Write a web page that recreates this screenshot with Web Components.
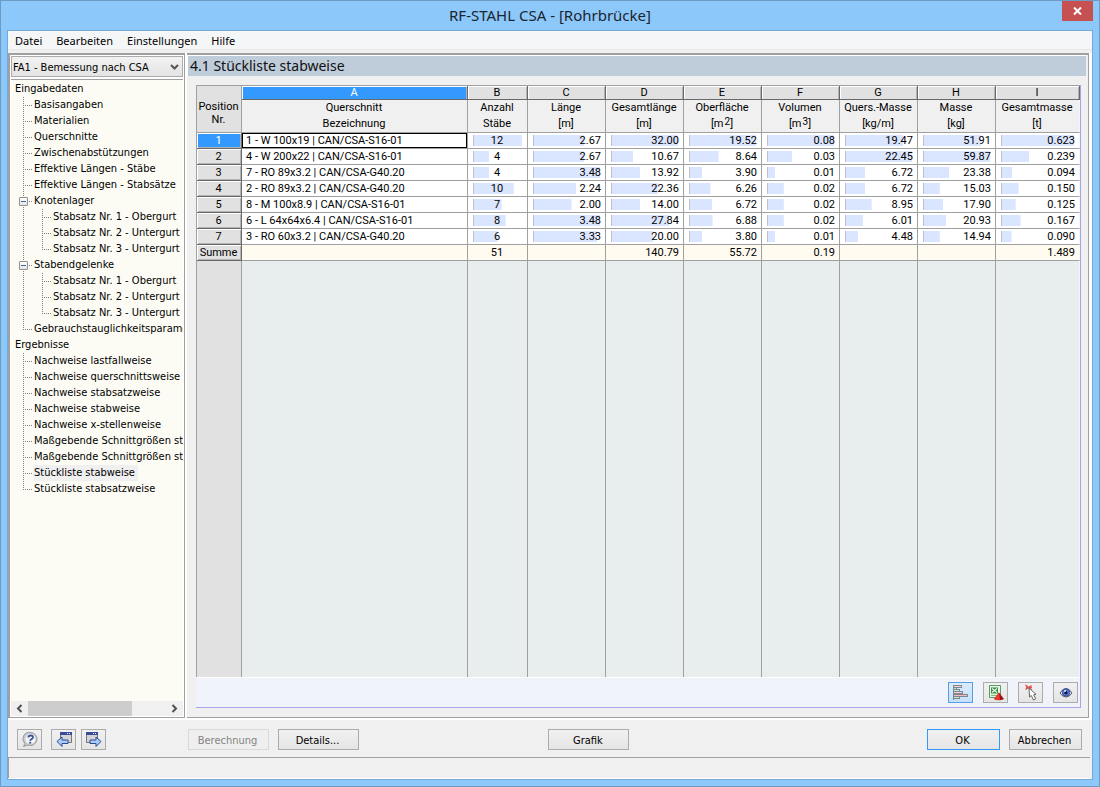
<!DOCTYPE html>
<html lang="de">
<head>
<meta charset="utf-8">
<title>RF-STAHL CSA - [Rohrbrücke]</title>
<style>
  body {
    margin: 0;
    color: #000;
    font: 11px/16px "DejaVu Sans Condensed", "Liberation Sans", sans-serif;
    --line: #a0a0a0;
    --face: #f0f0f0;
    --ui: "Noto Sans", "Open Sans", sans-serif;
    --grid-font: Roboto, "Liberation Sans", sans-serif;
  }
</style>
</head>
<body>
<app-window caption="RF-STAHL CSA - [Rohrbrücke]">
  <menu-bar slot="menu" items="Datei,Bearbeiten,Einstellungen,Hilfe"></menu-bar>

  <side-panel slot="nav" case="FA1 - Bemessung nach CSA">
    <tree-node root label="Eingabedaten">
      <tree-node label="Basisangaben"></tree-node>
      <tree-node label="Materialien"></tree-node>
      <tree-node label="Querschnitte"></tree-node>
      <tree-node label="Zwischenabstützungen"></tree-node>
      <tree-node label="Effektive Längen - Stäbe"></tree-node>
      <tree-node label="Effektive Längen - Stabsätze"></tree-node>
      <tree-node label="Knotenlager" open>
        <tree-node label="Stabsatz Nr. 1 - Obergurt"></tree-node>
        <tree-node label="Stabsatz Nr. 2 - Untergurt"></tree-node>
        <tree-node label="Stabsatz Nr. 3 - Untergurt"></tree-node>
      </tree-node>
      <tree-node label="Stabendgelenke" open>
        <tree-node label="Stabsatz Nr. 1 - Obergurt"></tree-node>
        <tree-node label="Stabsatz Nr. 2 - Untergurt"></tree-node>
        <tree-node label="Stabsatz Nr. 3 - Untergurt"></tree-node>
      </tree-node>
      <tree-node label="Gebrauchstauglichkeitsparameter"></tree-node>
    </tree-node>
    <tree-node root label="Ergebnisse">
      <tree-node label="Nachweise lastfallweise"></tree-node>
      <tree-node label="Nachweise querschnittsweise"></tree-node>
      <tree-node label="Nachweise stabsatzweise"></tree-node>
      <tree-node label="Nachweise stabweise"></tree-node>
      <tree-node label="Nachweise x-stellenweise"></tree-node>
      <tree-node label="Maßgebende Schnittgrößen stabweise"></tree-node>
      <tree-node label="Maßgebende Schnittgrößen stabsatzweise"></tree-node>
      <tree-node label="Stückliste stabweise" selected></tree-node>
      <tree-node label="Stückliste stabsatzweise"></tree-node>
    </tree-node>
  </side-panel>

  <result-panel slot="main" heading="4.1 Stückliste stabweise">
    <parts-table></parts-table>
    <push-button slot="tools" icon active name="Balken anzeigen">
      <svg width="17" height="17" viewBox="0 0 17 17" shape-rendering="crispEdges"><g fill="#fbd3d3" stroke="#7d8794"><path d="M1.500 1.500h8v2h-8zM1.500 7.500h9v2h-9z"/><path d="M1.500 10.500h14v2h-14z" fill="#f7b9bd"/></g><g fill="#c4ecc8" stroke="#7d8794"><path d="M1.500 3.500h3v2h-3zM1.500 5.500h6v2h-6zM1.500 12.500h6v2h-6z"/></g><path d="M1 1v15" stroke="#7d8794"/></svg>
    </push-button>
    <push-button slot="tools" icon name="Excel-Export">
      <svg width="18" height="18" viewBox="0 0 18 18"><path d="M2.500 1.500h11v12h-11z" fill="#e6f3e6" stroke="#5c9c62"/><path d="M4 3.500h7v6H4z" fill="#348a40"/><path d="M5 4.500l5 4M10 4.500l-5 4" stroke="#e8f6e8" stroke-width="1.300"/><path d="M4 11.500h6" stroke="#7bbd7b"/><path d="M12 8.500l5 6.500q-5 2.500-10 0z" fill="#9c1212"/><path d="M12 8.500l1 7.500q-3.500 0-6-1z" fill="#ee3a30"/></svg>
    </push-button>
    <push-button slot="tools" icon name="Auswahl in der Grafik">
      <svg width="18" height="18" viewBox="0 0 18 18"><path d="M3.500 1l6 5M9.500 1.500l-6 4M4 3.500h6" stroke="#dd5555" stroke-width="1.500"/><path d="M7 4l.5 9 1.800-1.500 2.200 4.500 2.200-1.200-2-4 2.300-.5z" fill="#fff" stroke="#666"/></svg>
    </push-button>
    <push-button slot="tools" icon name="Ansichtsmodus">
      <svg width="16" height="14" viewBox="0 0 16 14"><path d="M2 7Q4.500 2.500 8 2.500T14 7Q11.500 11 8 11T2 7z" fill="#e8ecf8" stroke="#555a70"/><circle cx="8" cy="6.500" r="3.700" fill="#5c7fe0" stroke="#33458c"/><circle cx="8" cy="6.700" r="1.700" fill="#10153a"/><circle cx="7" cy="5" r="1" fill="#dfe8ff"/></svg>
    </push-button>
  </result-panel>

  <button-row slot="actions">
    <push-button slot="nav" icon name="Hilfe">
      <svg width="18" height="18" viewBox="0 0 18 18"><path d="M9.500 1.500a6.500 6.500 0 1 1-2.500 12.500L2.500 15.500l1.300-3A6.500 6.500 0 0 1 9.500 1.500z" fill="#c9cbd0" stroke="#9a9a9a"/><circle cx="9.500" cy="8" r="5" fill="#f4f5f8"/><path d="M7.300 6.500Q7.500 4.500 9.800 4.500T12 6.300Q12 7.300 10.600 8T9.300 9.800" fill="none" stroke="#3c5296" stroke-width="1.800"/><path d="M8.200 10.800h2v1.800h-2z" fill="#3c5296"/></svg>
    </push-button>
    <push-button slot="nav" icon name="Vorherige Maske">
      <svg width="18" height="18" viewBox="0 0 18 18"><path d="M5.500 2.500h11v9h-11z" fill="#d4d4d6" stroke="#777"/><path d="M5 1h12v3H5z" fill="#3a4b9c"/><path d="M12 2.500h1M14 2.500h1" stroke="#fff"/><path d="M2 10.500l5-4.500v3H13v3.500H7v3z" fill="#a9cbf8" stroke="#2c4a94"/></svg>
    </push-button>
    <push-button slot="nav" icon name="Nächste Maske">
      <svg width="18" height="18" viewBox="0 0 18 18"><path d="M1.500 2.500h11v9h-11z" fill="#d4d4d6" stroke="#777"/><path d="M1 1h12v3H1z" fill="#3a4b9c"/><path d="M8 2.500h1M10 2.500h1" stroke="#fff"/><path d="M16 10.500l-5-4.500v3H5v3.500h6v3z" fill="#a9cbf8" stroke="#2c4a94"/></svg>
    </push-button>
    <push-button slot="left" disabled>Berechnung</push-button>
    <push-button slot="left">Details...</push-button>
    <push-button slot="centre">Grafik</push-button>
    <push-button slot="right" narrow primary>OK</push-button>
    <push-button slot="right" narrow>Abbrechen</push-button>
  </button-row>
</app-window>

<script>
  class Base extends HTMLElement {
    constructor() {
      super();
      this.attachShadow({ mode: 'open' });
    }
    connectedCallback() {
      this.shadowRoot.innerHTML = this.render();
    }
    attr(name) {
      return this.getAttribute(name) || '';
    }
  }

  customElements.define('app-window', class extends Base {
    render() {
      return `<style>
        :host { display: flex; flex-direction: column; box-sizing: border-box; height: 100vh;
          background: #8dc8fa; border: 1px solid #6d9bc3; }
        header { display: grid; grid-template-columns: 1fr auto 1fr; height: 29px; padding: 0 6px; }
        h1 { grid-column: 2; margin: 0; font: 15px/29px var(--ui); color: #1b2530; }
        .close { justify-self: end; width: 31px; height: 20px; padding: 0; border: 0; background: #c75050;
          display: grid; place-items: center; }
        .client { flex: 1; min-height: 0; display: flex; flex-direction: column; margin: 0 6px 6px;
          background: var(--face); border: 1px solid #74a9d8; }
        .work { flex: 1; min-height: 0; display: grid; grid-template-columns: 177px minmax(0, 1fr);
          grid-template-rows: minmax(0, 1fr); gap: 2px; margin-top: 3px; padding: 0 3px 2px 0; background: #fff; }
        footer { height: 19px; margin: 0 2px 1px 0; border: solid; border-width: 1px 0 0 1px;
          border-color: var(--line); box-shadow: 0 1px #fff; padding-bottom: 1px; }
      </style>
      <header><h1>${this.attr('caption')}</h1>
        <button class="close" aria-label="Schließen"><svg width="9" height="8" viewBox="0 0 9 8"><path d="M1 .5l7 7M8 .5l-7 7" stroke="#fff" stroke-width="2"/></svg></button></header>
      <div class="client">
        <slot name="menu"></slot>
        <div class="work"><slot name="nav"></slot><slot name="main"></slot></div>
        <slot name="actions"></slot>
        <footer></footer>
      </div>`;
    }
  });

  customElements.define('menu-bar', class extends Base {
    render() {
      return `<style>
        :host { display: block; background: #f5f6f7; border-bottom: 1px solid #e8e8e8; }
        nav { display: flex; gap: 14px; height: 18px; padding: 0 7px; }
        a { color: #000; text-decoration: none; font: 11px/20px var(--ui); }
      </style>
      <nav>${this.attr('items').split(',').map(t => `<a href="#">${t}</a>`).join('')}</nav>`;
    }
  });

  customElements.define('side-panel', class extends Base {
    render() {
      return `<style>
        :host { display: flex; flex-direction: column; min-width: 0; box-sizing: border-box; background: #fff;
          border: solid var(--line); border-width: 2px 1px 1px 2px; padding: 1px 1px 1px 1px; }
        .pick { position: relative; margin-bottom: 2px; }
        select { appearance: none; display: block; width: 100%; height: 21px; margin: 0; padding: 2px 18px 0 1px;
          border: 1px solid #acacac; border-radius: 0; background: linear-gradient(#f2f2f2, #e4e4e4);
          color: #000; font: inherit; }
        .pick svg { position: absolute; right: 4px; top: 8px; pointer-events: none; }
        .tree { flex: 1; min-height: 0; overflow: hidden; padding: 1px 0 0 4px; border-top: 1px solid var(--line);
          background: #fcfcf4; white-space: nowrap; }
        .scroll { display: flex; height: 15px; background: var(--face); }
        .scroll button { width: 17px; padding: 0; border: 0; background: none; display: grid; place-items: center; }
        .track { flex: 1; }
        .thumb { width: 75%; height: 100%; background: #cdcdcd; }
      </style>
      <div class="pick"><select aria-label="Bemessungsfall"><option>${this.attr('case')}</option></select>
        <svg width="9" height="7" viewBox="0 0 9 7"><path d="M1 1l3.500 3.500L8 1" fill="none" stroke="#555" stroke-width="2"/></svg></div>
      <div class="tree"><slot></slot></div>
      <div class="scroll">
        <button aria-label="Nach links"><svg width="7" height="9" viewBox="0 0 7 9"><path d="M5.500 1L2 4.500 5.500 8" fill="none" stroke="#505050" stroke-width="2"/></svg></button>
        <div class="track"><div class="thumb"></div></div>
        <button aria-label="Nach rechts"><svg width="7" height="9" viewBox="0 0 7 9"><path d="M1.500 1L5 4.500 1.500 8" fill="none" stroke="#505050" stroke-width="2"/></svg></button>
      </div>`;
    }
  });

  customElements.define('tree-node', class extends Base {
    render() {
      return `<style>
        :host { display: block; position: relative; padding-left: 18px; }
        :host([root]) { padding-left: 0; }
        :host(:not([root]))::before { content: ""; position: absolute; left: 8px; top: 0; bottom: 0; width: 1px;
          background: repeating-linear-gradient(#808080 0 1px, transparent 1px 2px); }
        :host(:not([root]):last-child)::before { bottom: auto; height: 9px; }
        :host(:not([root]))::after { content: ""; position: absolute; left: 8px; top: 8px; width: 9px; height: 1px;
          background: repeating-linear-gradient(90deg, #808080 0 1px, transparent 1px 2px); }
        span { display: inline-block; height: 16px; padding: 0 3px 0 1px; vertical-align: top; }
        :host([root]) span { padding-left: 0; }
        :host([selected]) span { background: #f0f0f0; }
        .kids { padding-left: 1px; }
        :host([root]) .kids { padding-left: 0; }
        button { position: absolute; z-index: 1; left: 4px; top: 4px; box-sizing: border-box; width: 9px; height: 9px;
          padding: 0; border: 1px solid #919191; border-radius: 1px;
          background: linear-gradient(#4b63a7, #4b63a7) 1px 3px / 5px 1px no-repeat, linear-gradient(#fff, #e4e4e4); }
      </style>
      ${this.hasAttribute('open') ? '<button aria-label="Zuklappen" aria-expanded="true"></button>' : ''}
      <span>${this.attr('label')}</span><div class="kids"><slot></slot></div>`;
    }
  });

  customElements.define('result-panel', class extends Base {
    render() {
      return `<style>
        :host { display: flex; flex-direction: column; min-width: 0; box-sizing: border-box; background: var(--face);
          border: solid var(--line); border-width: 2px 1px 1px 0; }
        h2 { margin: 0 2px 0 0; padding-left: 2px; border: solid #fff; border-width: 1px 0 0 1px;
          background: #bfccda; font: 14px/20px var(--ui); color: #111; }
        .sheet { flex: 1; min-height: 0; display: flex; flex-direction: column; margin: 9px 7px 9px 9px;
          border: solid #a9a4ea; border-width: 0 1px 1px 0; background: #f0f4fa; }
        .tools { display: flex; justify-content: flex-end; gap: 10px; padding: 4px 2px; border-top: 1px solid #fff; }
      </style>
      <h2>${this.attr('heading')}</h2>
      <div class="sheet"><slot></slot><div class="tools"><slot name="tools"></slot></div></div>`;
    }
  });

  customElements.define('parts-table', class extends Base {
    render() {
      const heads = [['Querschnitt', 'Bezeichnung'], ['Anzahl', 'Stäbe'], ['Länge', '[m]'], ['Gesamtlänge', '[m]'],
        ['Oberfläche', '[m<sup>2</sup>]'], ['Volumen', '[m<sup>3</sup>]'], ['Quers.-Masse', '[kg/m]'],
        ['Masse', '[kg]'], ['Gesamtmasse', '[t]']];
      const rows = [
        ['1 - W 100x19 | CAN/CSA-S16-01', '12', '2.67', '32.00', '19.52', '0.08', '19.47', '51.91', '0.623'],
        ['4 - W 200x22 | CAN/CSA-S16-01', '4', '2.67', '10.67', '8.64', '0.03', '22.45', '59.87', '0.239'],
        ['7 - RO 89x3.2 | CAN/CSA-G40.20', '4', '3.48', '13.92', '3.90', '0.01', '6.72', '23.38', '0.094'],
        ['2 - RO 89x3.2 | CAN/CSA-G40.20', '10', '2.24', '22.36', '6.26', '0.02', '6.72', '15.03', '0.150'],
        ['8 - M 100x8.9 | CAN/CSA-S16-01', '7', '2.00', '14.00', '6.72', '0.02', '8.95', '17.90', '0.125'],
        ['6 - L 64x64x6.4 | CAN/CSA-S16-01', '8', '3.48', '27.84', '6.88', '0.02', '6.01', '20.93', '0.167'],
        ['3 - RO 60x3.2 | CAN/CSA-G40.20', '6', '3.33', '20.00', '3.80', '0.01', '4.48', '14.94', '0.090']];
      const sums = ['', '51', '', '140.79', '55.72', '0.19', '', '', '1.489'];
      const max = heads.map((_, i) => Math.max(...rows.map(r => parseFloat(r[i]))));
      const cell = (v, i) => i === 0 ? `<td class="name">${v}</td>`
        : `<td class="bar" style="--v:${(v / max[i]).toFixed(3)}">${v}</td>`;
      return `<style>
        :host { display: block; flex: 1; min-height: 0; }
        table { width: 100%; height: 100%; table-layout: fixed; border-collapse: separate; border-spacing: 0;
          border: solid var(--line); border-width: 1px 0 0 1px; font: 11px/15px var(--grid-font); }
        .c0 { width: 45px; } .c2 { width: 60px; } .c3 { width: 78px; } .c9 { width: 84px; }
        th, td { box-sizing: border-box; padding: 0; height: 16px; border: solid var(--line); border-width: 0 1px 1px 0;
          font-weight: 400; text-align: right; overflow: hidden; white-space: nowrap; }
        td { padding-right: 4px; background: #fff; }
        tr > :last-child { border-right-color: #f4f4fb; }
        th { text-align: center; background: #f0f0f0; padding-right: 1px; }
        .letters th { height: 14px; line-height: 13px; background: #e1e1e1; border-color: #696969;
          box-shadow: inset 1px 1px #fff, inset -1px 0 #b4b4b4; }
        .letters .corner { height: 47px; line-height: 13px; vertical-align: middle; padding-bottom: 2px;
          border-color: var(--line); box-shadow: none; padding-top: 10px; }
        .letters .on, tbody .on { background: #3399ff; color: #fff; }
        .titles th { height: 33px; line-height: 16px; vertical-align: top; }
        sup { font-size: 10px; line-height: 1px; vertical-align: 2px; padding-left: 1px; }
        tbody th { background: #e1e1e1; border-color: #696969; box-shadow: inset 1px 1px #fff, inset -1px -1px #b4b4b4; }
        .name { padding: 0 0 0 4px; text-align: left; }
        .current .name { box-shadow: inset 0 0 0 1px #000; }
        .bar { background: linear-gradient(#c0c0c8, #c0c0c8) 5px 2px / 1px 11px no-repeat,
          linear-gradient(#dae5ff, #dae5ff) 5px 2px / calc((100% - 10px) * var(--v)) 11px no-repeat, #fff; }
        td:nth-child(3) { text-align: center; padding: 0 1px 0 0; }
        .sum td { background: #fffbf0; }
        .fill td { height: auto; background: #e8eeee; border-bottom: 0; }
        .fill td:first-child { background: #e1e1e1; }
      </style>
      <table>
        <colgroup><col class="c0"><col><col class="c2">${'<col class="c3">'.repeat(6)}<col class="c9"></colgroup>
        <thead>
          <tr class="letters"><th class="corner" rowspan="2">Position<br>Nr.</th>${[...'ABCDEFGHI'].map(l => `<th${l === 'A' ? ' class="on"' : ''}>${l}</th>`).join('')}</tr>
          <tr class="titles">${heads.map(h => `<th scope="col">${h[0]}<br>${h[1]}</th>`).join('')}</tr>
        </thead>
        <tbody>
          ${rows.map((r, n) => `<tr${n ? '' : ' class="current"'}><th scope="row"${n ? '' : ' class="on"'}>${n + 1}</th>${r.map(cell).join('')}</tr>`).join('')}
          <tr class="sum"><th scope="row">Summe</th>${sums.map(v => `<td>${v}</td>`).join('')}</tr>
          <tr class="fill" aria-hidden="true">${'<td></td>'.repeat(10)}</tr>
        </tbody>
      </table>`;
    }
  });

  customElements.define('button-row', class extends Base {
    render() {
      return `<style>
        :host { display: flex; padding: 9px 10px 7px 9px; }
        div { display: flex; gap: 9px; }
        .nav { gap: 5px; width: 171px; }
        .nav ::slotted(:first-child) { margin-right: 4px; }
        .a { flex: 7; } .b { flex: 11; }
      </style>
      <div class="nav"><slot name="nav"></slot></div>
      <div><slot name="left"></slot></div><span class="a"></span>
      <slot name="centre"></slot><span class="b"></span>
      <div><slot name="right"></slot></div>`;
    }
  });

  customElements.define('push-button', class extends Base {
    render() {
      return `<style>
        :host { display: block; width: 81px; height: 21px; }
        :host([narrow]) { width: 73px; }
        :host([icon]) { width: 25px; }
        button { display: grid; place-items: center; width: 100%; height: 100%; box-sizing: border-box; padding: 1px 2px 0 0;
          border: 1px solid #acacac; background: linear-gradient(#f1f1f1, #e5e5e5); color: #000; font: inherit; line-height: 19px; }
        :host([icon]) button { padding: 0; }
        button:disabled { border-color: #d9d9d9; background: #efefef; color: #838383; }
        :host([primary]) button { border-color: #3399ff; }
        :host([active]) button { border-color: #569de5; background: linear-gradient(#daecfc, #c4e0fc); }
      </style>
      <button${this.hasAttribute('name') ? ` aria-label="${this.attr('name')}"` : ''}${this.hasAttribute('disabled') ? ' disabled' : ''}><slot></slot></button>`;
    }
  });
</script>
</body>
</html>
